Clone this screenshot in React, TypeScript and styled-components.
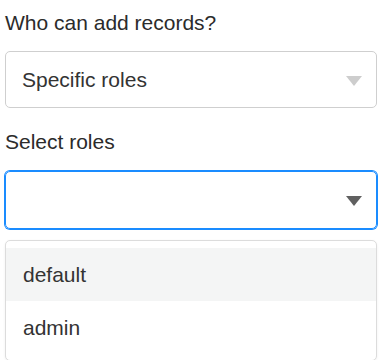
import React from 'react';
import styled, { createGlobalStyle, css } from 'styled-components';

const GlobalStyle = createGlobalStyle`
  html, body {
    margin: 0;
    padding: 0;
    background: #fff;
  }
  body {
    font-family: 'Liberation Sans', Arial, sans-serif;
    color: #333;
  }
`;

const roles = ['default', 'admin'];

const App: React.FC = () => {
  return (
    <>
      <GlobalStyle />
      <Form>
        <Label>Who can add records?</Label>
        <Select>
          <span>Specific roles</span>
          <Caret />
        </Select>
        <Label $gap={22}>Select roles</Label>
        <Select $focused>
          <span></span>
          <Caret $dark />
        </Select>
        <Menu>
          {roles.map((role, i) => (
            <MenuItem key={role} $active={i === 0}>
              {role}
            </MenuItem>
          ))}
        </Menu>
      </Form>
    </>
  );
};

const Form = styled.div`
  width: 383px;
  box-sizing: border-box;
  padding: 0 6px 0 5px;
  display: flex;
  flex-direction: column;
`;

const Label = styled.div<{ $gap?: number }>`
  margin-top: ${(p) => p.$gap ?? 11}px;
  font-size: 21px;
  line-height: 24px;
  color: #2b2b2b;
`;

const Select = styled.div<{ $focused?: boolean }>`
  margin-top: 16px;
  height: 57px;
  box-sizing: border-box;
  display: flex;
  align-items: center;
  justify-content: space-between;
  padding: 0 14px 0 16px;
  border: 1px solid #cfcfcf;
  border-radius: 5px;
  font-size: 21px;
  color: #333;

  ${(p) =>
    p.$focused &&
    css`
      margin-top: 17px;
      height: 58px;
      border-color: #1a8cff;
      box-shadow: 0 0 0 1px #1a8cff;
    `}
`;

const Caret = styled.div<{ $dark?: boolean }>`
  width: 0;
  height: 0;
  border-left: 8px solid transparent;
  border-right: 8px solid transparent;
  border-top: 10px solid ${(p) => (p.$dark ? '#606060' : '#cdcdcd')};
  margin-top: 2px;
`;

const Menu = styled.div`
  margin-top: 11px;
  border: 1px solid #dcdcdc;
  border-radius: 5px;
  padding: 7px 0 6px;
  box-shadow: 0 1px 3px rgba(0, 0, 0, 0.06);
  background: #fff;
`;

const MenuItem = styled.div<{ $active?: boolean }>`
  height: 53px;
  display: flex;
  align-items: center;
  padding-left: 17px;
  font-size: 21px;
  color: #333;
  background: ${(p) => (p.$active ? '#f4f5f5' : '#fff')};
`;

export default App;
